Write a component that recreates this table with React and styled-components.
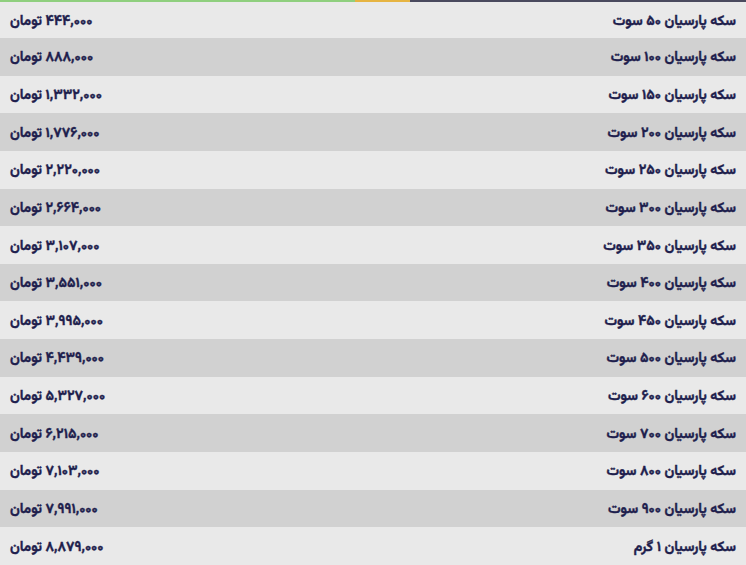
import React from "react";
import styled, { createGlobalStyle } from "styled-components";

const Global = createGlobalStyle`
  html, body { margin: 0; padding: 0; background: #e9e9e9; }
  #root { width: 746px; height: 565px; overflow: hidden; }
`;

const Page = styled.div`
  width: 746px;
  height: 565px;
  display: flex;
  flex-direction: column;
  background: #e9e9e9;
  font-family: "Vazirmatn", "Noto Sans Arabic", "DejaVu Sans", sans-serif;
`;

const TopStrip = styled.div`
  height: 2px;
  display: flex;
  flex: none;
`;

const StripPart = styled.div`
  background: ${(p) => p.$color};
  width: ${(p) => p.$w};
  flex: ${(p) => (p.$grow ? 1 : "none")};
`;

const Table = styled.div`
  flex: 1;
  display: grid;
  grid-template-rows: 36px repeat(14, 1fr);
  direction: rtl;
`;

const Row = styled.div`
  display: flex;
  align-items: center;
  justify-content: space-between;
  padding: 3px 10px 0;
  background: ${(p) => (p.$alt ? "#d1d1d1" : "#e9e9e9")};
  color: #1e1e4d;
  font-weight: 700;
  font-size: 14px;
  -webkit-text-stroke: 0.4px #1e1e4d;
`;

const Name = styled.span``;
const Price = styled.span``;

const rows = [
  ["سکه پارسیان ۵۰ سوت", "۴۴۴,۰۰۰"],
  ["سکه پارسیان ۱۰۰ سوت", "۸۸۸,۰۰۰"],
  ["سکه پارسیان ۱۵۰ سوت", "۱,۳۳۲,۰۰۰"],
  ["سکه پارسیان ۲۰۰ سوت", "۱,۷۷۶,۰۰۰"],
  ["سکه پارسیان ۲۵۰ سوت", "۲,۲۲۰,۰۰۰"],
  ["سکه پارسیان ۳۰۰ سوت", "۲,۶۶۴,۰۰۰"],
  ["سکه پارسیان ۳۵۰ سوت", "۳,۱۰۷,۰۰۰"],
  ["سکه پارسیان ۴۰۰ سوت", "۳,۵۵۱,۰۰۰"],
  ["سکه پارسیان ۴۵۰ سوت", "۳,۹۹۵,۰۰۰"],
  ["سکه پارسیان ۵۰۰ سوت", "۴,۴۳۹,۰۰۰"],
  ["سکه پارسیان ۶۰۰ سوت", "۵,۳۲۷,۰۰۰"],
  ["سکه پارسیان ۷۰۰ سوت", "۶,۲۱۵,۰۰۰"],
  ["سکه پارسیان ۸۰۰ سوت", "۷,۱۰۳,۰۰۰"],
  ["سکه پارسیان ۹۰۰ سوت", "۷,۹۹۱,۰۰۰"],
  ["سکه پارسیان ۱ گرم", "۸,۸۷۹,۰۰۰"],
];

export default function App() {
  return (
    <>
      <Global />
      <Page>
        <TopStrip>
          <StripPart $color="#8fcf7e" $w="355px" />
          <StripPart $color="#e6b442" $w="55px" />
          <StripPart $color="#4a4a5e" $grow />
        </TopStrip>
        <Table>
          {rows.map(([name, price], i) => (
            <Row key={i} $alt={i % 2 === 1}>
              <Name>{name}</Name>
              <Price>{price} تومان</Price>
            </Row>
          ))}
        </Table>
      </Page>
    </>
  );
}
